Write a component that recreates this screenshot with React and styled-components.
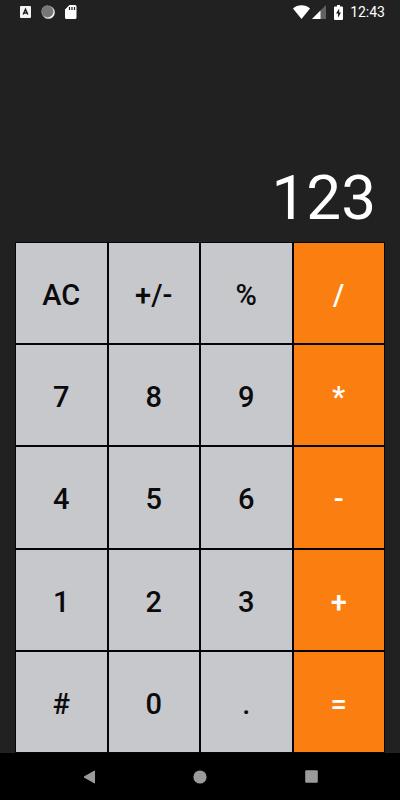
import React, { useState } from 'react';
import styled, { createGlobalStyle } from 'styled-components';

const GlobalStyle = createGlobalStyle`
  body {
    margin: 0;
    background: #212121;
    font-family: Roboto, "Liberation Sans", sans-serif;
  }
`;

const Screen = styled.div`
  display: flex;
  flex-direction: column;
  min-height: 100vh;
  background: #212121;
`;

const StatusBar = styled.header`
  display: flex;
  align-items: center;
  justify-content: space-between;
  height: 24px;
  padding: 0 15px 0 19px;
  color: #fff;
`;

const Notifications = styled.div`
  display: flex;
  align-items: center;
  gap: 9px;
`;

const System = styled.div`
  display: flex;
  align-items: center;
  gap: 2px;
`;

const Battery = styled.svg`
  margin: 0 5px 0 6px;
`;

const Clock = styled.time`
  font-size: 14px;
  line-height: 24px;
`;

const Display = styled.output`
  display: block;
  padding: 136px 24px 6px;
  color: #fff;
  font-size: 62px;
  line-height: 76px;
  text-align: right;
`;

const Keypad = styled.main`
  flex: 1;
  display: grid;
  grid-template-columns: repeat(4, 1fr);
  grid-auto-rows: 1fr;
  gap: 2px;
  margin: 0 15px;
  padding: 1px;
  background: #04050c;
`;

const Key = styled.button`
  margin: 0;
  padding: 4px 0 0;
  border: 0;
  border-radius: 0;
  background: ${({ $operator }) => ($operator ? '#fb7f10' : '#c7c8cc')};
  color: ${({ $operator }) => ($operator ? '#fff' : '#0b0b0c')};
  font-family: inherit;
  font-size: 29px;
  font-weight: 500;
  line-height: 34px;
`;

const NavBar = styled.nav`
  display: flex;
  align-items: center;
  justify-content: center;
  gap: 63px;
  height: 47px;
  background: #000;
`;

const NavButton = styled.button`
  display: flex;
  align-items: center;
  justify-content: center;
  width: 48px;
  height: 47px;
  padding: 0;
  border: 0;
  background: none;
  color: #9b9b9b;
`;

const KEYS = [
  'AC', '+/-', '%', '/',
  '7', '8', '9', '*',
  '4', '5', '6', '-',
  '1', '2', '3', '+',
  '#', '0', '.', '=',
];

const OPERATORS = ['/', '*', '-', '+', '='];

const App = () => {
  const [value, setValue] = useState('123');

  const press = (key) => {
    if (key === 'AC') {
      setValue('0');
    } else if (/^[0-9.]$/.test(key)) {
      setValue(value === '0' ? key : value + key);
    }
  };

  return (
    <Screen>
      <GlobalStyle />
      <StatusBar>
        <Notifications>
          <svg width="13" height="14" viewBox="0 0 13 14" aria-hidden="true">
            <rect x="1" y="1" width="11" height="12" rx="1" fill="#f4f4f4" />
            <path
              d="M4.200 9.500 6.500 4.300 8.800 9.500M5 8h3"
              fill="none"
              stroke="#212121"
              strokeWidth="1.500"
            />
          </svg>
          <svg width="14" height="14" viewBox="0 0 14 14" aria-hidden="true">
            <circle cx="7.400" cy="7.400" r="6.400" fill="#f4f4f4" />
            <circle cx="6.400" cy="6.400" r="6" fill="#777" />
            <circle cx="6.400" cy="6.400" r="5.700" fill="none" stroke="#999" strokeDasharray="1 1" />
          </svg>
          <svg width="14" height="16" viewBox="0 0 14 16" aria-hidden="true">
            <path
              d="M5.500 1H11a1.500 1.500 0 0 1 1.500 1.500v11A1.500 1.500 0 0 1 11 15H2.500A1.500 1.500 0 0 1 1 13.500V5.500z"
              fill="#fff"
            />
            <path d="M5.500 3v3M8 3v3M10.500 3v3" stroke="#212121" strokeWidth="1.200" />
          </svg>
        </Notifications>
        <System>
          <svg width="17" height="14" viewBox="0 0 17 14" aria-hidden="true">
            <path d="M0 3.500C4.500-.7 12.500-.7 17 3.500L8.500 14z" fill="#fff" />
          </svg>
          <svg width="14" height="14" viewBox="0 0 14 14" aria-hidden="true">
            <path d="M14 0v14H0z" fill="#616161" />
            <path d="M8.500 5.500V14H0z" fill="#fff" />
          </svg>
          <Battery width="9" height="15" viewBox="0 0 9 15" aria-hidden="true">
            <path
              d="M3 0h3v1.500h2a1 1 0 0 1 1 1V14a1 1 0 0 1-1 1H1a1 1 0 0 1-1-1V2.500a1 1 0 0 1 1-1h2z"
              fill="#fff"
            />
            <path d="M5.200 3.500 2 8.500h2v4.200l3-5.200H5.200z" fill="#212121" />
          </Battery>
          <Clock>12:43</Clock>
        </System>
      </StatusBar>
      <Display aria-label="Result">{value}</Display>
      <Keypad>
        {KEYS.map((key) => (
          <Key
            key={key}
            type="button"
            $operator={OPERATORS.includes(key)}
            onClick={() => press(key)}
          >
            {key}
          </Key>
        ))}
      </Keypad>
      <NavBar>
        <NavButton type="button" aria-label="Back">
          <svg width="12" height="14" viewBox="0 0 12 14">
            <path d="M11.500 1v12L1 7z" fill="currentColor" stroke="currentColor" strokeLinejoin="round" />
          </svg>
        </NavButton>
        <NavButton type="button" aria-label="Home">
          <svg width="14" height="14" viewBox="0 0 14 14">
            <circle cx="7" cy="7" r="6.600" fill="currentColor" />
          </svg>
        </NavButton>
        <NavButton type="button" aria-label="Overview">
          <svg width="13" height="13" viewBox="0 0 13 13">
            <rect x=".2" y=".2" width="12.600" height="12.600" rx="1" fill="currentColor" />
          </svg>
        </NavButton>
      </NavBar>
    </Screen>
  );
};

export default App;
